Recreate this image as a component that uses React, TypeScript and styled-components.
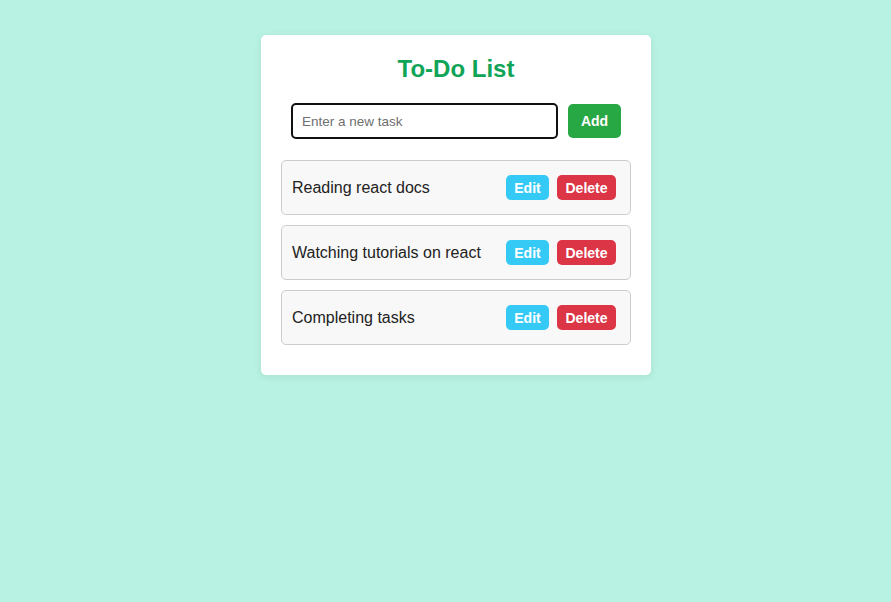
import React, { useState } from "react";
import styled, { createGlobalStyle } from "styled-components";

const GlobalStyle = createGlobalStyle`
  html, body {
    margin: 0;
    padding: 0;
    background: #b8f2e2;
    font-family: "Liberation Sans", Arial, sans-serif;
  }
  * { box-sizing: border-box; }
`;

const Page = styled.div`
  min-height: 602px;
  display: flex;
  justify-content: center;
  align-items: flex-start;
  padding-top: 35px;
  padding-left: 21px;
`;

const Card = styled.div`
  width: 390px;
  background: #ffffff;
  border-radius: 5px;
  padding: 20px 20px 20px;
  box-shadow: 0 2px 8px rgba(0, 0, 0, 0.08);
`;

const Title = styled.h2`
  margin: 0 0 20px;
  text-align: center;
  color: #10a457;
  font-size: 24px;
  font-weight: bold;
  line-height: 28px;
  height: 28px;
`;

const InputRow = styled.div`
  display: flex;
  justify-content: center;
  align-items: center;
  gap: 10px;
  margin-bottom: 21px;
`;

const TaskInput = styled.input`
  width: 267px;
  height: 36px;
  border: 2px solid #111;
  border-radius: 5px;
  padding: 0 9px;
  font-family: "Liberation Sans", Arial, sans-serif;
  font-size: 13.5px;
  color: #222;
  outline: none;
  &::placeholder { color: #6f6f6f; }
`;

const Button = styled.button<{ $bg: string; $h: number; $w: number }>`
  background: ${(p) => p.$bg};
  color: #fff;
  border: none;
  border-radius: 5px;
  height: ${(p) => p.$h}px;
  width: ${(p) => p.$w}px;
  padding: 0;
  font-family: "Liberation Sans", Arial, sans-serif;
  font-size: 14px;
  font-weight: bold;
  cursor: pointer;
`;

const List = styled.ul`
  list-style: none;
  margin: 0;
  padding: 0;
  display: flex;
  flex-direction: column;
  gap: 10px;
  padding-bottom: 10px;
`;

const Item = styled.li`
  height: 55px;
  display: flex;
  align-items: center;
  justify-content: space-between;
  background: #f8f8f8;
  border: 1px solid #cccccc;
  border-radius: 5px;
  padding: 0 14px 0 10px;
`;

const ItemText = styled.span`
  font-size: 16px;
  color: #222;
`;

const Actions = styled.div`
  display: flex;
  gap: 8px;
  align-items: center;
`;

export default function App() {
  const [tasks] = useState([
    "Reading react docs",
    "Watching tutorials on react",
    "Completing tasks",
  ]);
  return (
    <>
      <GlobalStyle />
      <Page>
        <Card>
          <Title>To-Do List</Title>
          <InputRow>
            <TaskInput placeholder="Enter a new task" />
            <Button $bg="#28a745" $h={34} $w={53}>Add</Button>
          </InputRow>
          <List>
            {tasks.map((t) => (
              <Item key={t}>
                <ItemText>{t}</ItemText>
                <Actions>
                  <Button $bg="#35c9f5" $h={25} $w={43}>Edit</Button>
                  <Button $bg="#dc3545" $h={25} $w={59}>Delete</Button>
                </Actions>
              </Item>
            ))}
          </List>
        </Card>
      </Page>
    </>
  );
}
